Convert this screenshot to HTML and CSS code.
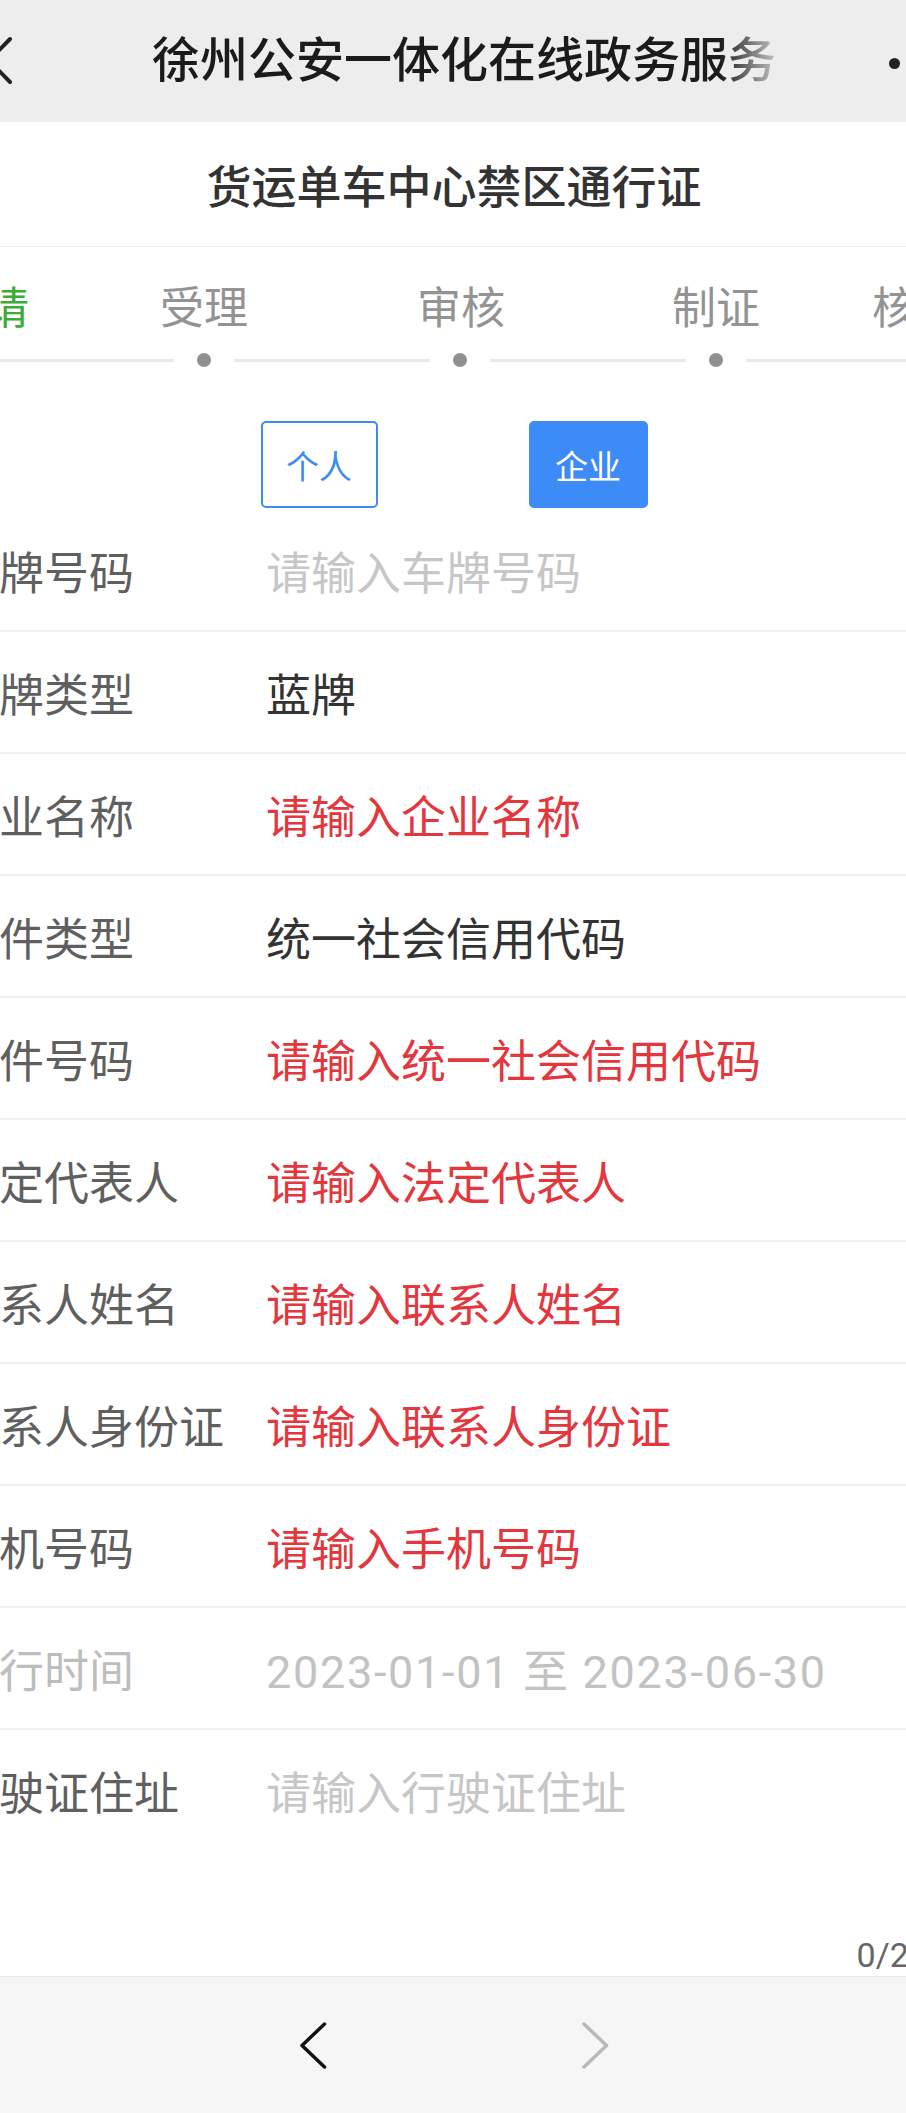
FILE: index.html
```html
<!DOCTYPE html>
<html lang="zh-CN">
<head>
<meta charset="utf-8">
<title>货运单车中心禁区通行证</title>
<link rel="stylesheet" href="styles.css">
</head>
<body>
<div class="page">
  <header class="nav">
    <div class="nav-back">
      <svg width="70" height="122" viewBox="0 0 70 122"><polyline points="56,39 35,60.5 56,82" fill="none" stroke="#222" stroke-width="4" stroke-linecap="round" stroke-linejoin="round"/></svg>
    </div>
    <div class="nav-title">徐州公安一体化在线政务服务</div>
    <div class="nav-more"><i></i><i></i><i></i></div>
  </header>

  <div class="subtitle">货运单车中心禁区通行证</div>

  <div class="steps">
    <div class="step-labels">
      <span class="step done s1">申请</span>
      <span class="step s2">受理</span>
      <span class="step s3">审核</span>
      <span class="step s4">制证</span>
      <span class="step s5">核发</span>
    </div>
    <div class="step-track">
      <span class="seg seg-first"></span>
      <span class="dot"></span>
      <span class="seg seg-mid"></span>
      <span class="dot"></span>
      <span class="seg seg-mid"></span>
      <span class="dot"></span>
      <span class="seg seg-last"></span>
    </div>
  </div>

  <div class="types">
    <button class="type-btn">个人</button>
    <button class="type-btn active">企业</button>
  </div>

  <div class="form">
    <div class="row"><span class="label">车牌号码</span><span class="value ph">请输入车牌号码</span></div>
    <div class="row"><span class="label">车牌类型</span><span class="value">蓝牌</span></div>
    <div class="row"><span class="label">企业名称</span><span class="value req">请输入企业名称</span></div>
    <div class="row"><span class="label">证件类型</span><span class="value">统一社会信用代码</span></div>
    <div class="row"><span class="label">证件号码</span><span class="value req">请输入统一社会信用代码</span></div>
    <div class="row"><span class="label">法定代表人</span><span class="value req">请输入法定代表人</span></div>
    <div class="row"><span class="label">联系人姓名</span><span class="value req">请输入联系人姓名</span></div>
    <div class="row"><span class="label">联系人身份证</span><span class="value req">请输入联系人身份证</span></div>
    <div class="row"><span class="label">手机号码</span><span class="value req">请输入手机号码</span></div>
    <div class="row disabled"><span class="label">通行时间</span><span class="value date">2023-01-01 至 2023-06-30</span></div>
    <div class="row-area">
      <span class="label">行驶证住址</span>
      <span class="value ph">请输入行驶证住址</span>
      <span class="counter">0/200</span>
    </div>
  </div>

  <div class="toolbar">
    <svg class="tb-icon" width="27" height="47" viewBox="0 0 27 47"><polyline points="24.5,2 2,23.5 24.5,45" fill="none" stroke="#111" stroke-width="3.5" stroke-linecap="round" stroke-linejoin="round"/></svg>
    <svg class="tb-icon" width="27" height="47" viewBox="0 0 27 47"><polyline points="2,2 24.5,23.5 2,45" fill="none" stroke="#b8b8b8" stroke-width="3.5" stroke-linecap="round" stroke-linejoin="round"/></svg>
  </div>
</div>
</body>
</html>
```

FILE: styles.css
```css
html, body {
  margin: 0;
  padding: 0;
  background: #ffffff;
}
body {
  width: 906px;
  overflow-x: hidden;
  font-family: Roboto, "Noto Sans CJK SC", "Noto Sans", sans-serif;
  color: #333;
}
.page {
  width: 1000px;
  margin-left: -46px;
}

/* top navigation */
.nav {
  height: 122px;
  background: #ededed;
  display: grid;
  grid-template-columns: 198px 624px 1fr;
  align-items: center;
}
.nav-back {
  height: 122px;
}
.nav-back svg {
  display: block;
}
.nav-title {
  font-size: 48px;
  font-weight: 500;
  color: #1b1b1b;
  white-space: nowrap;
  line-height: 60px;
  -webkit-mask-image: linear-gradient(to right, #000 0, #000 calc(100% - 56px), rgba(0,0,0,0.2) 100%);
  mask-image: linear-gradient(to right, #000 0, #000 calc(100% - 56px), rgba(0,0,0,0.2) 100%);
}
.nav-more {
  display: flex;
  gap: 6px;
  padding-left: 113px;
}
.nav-more i {
  width: 11px;
  height: 11px;
  border-radius: 50%;
  background: #222;
  margin-top: 4px;
}

/* sub title */
.subtitle {
  height: 125px;
  border-bottom: 1px solid #ececec;
  display: flex;
  align-items: center;
  justify-content: center;
  font-size: 45px;
  font-weight: 500;
  color: #333;
  box-sizing: border-box;
}

/* steps */
.steps {
  padding-top: 40px;
}
.step-labels {
  display: flex;
  font-size: 44px;
  line-height: 44px;
  color: #939393;
  white-space: nowrap;
}
.step.done { color: #3dab37; }
.s1 { margin-left: -13px; }
.s2 { margin-left: 131px; }
.s3 { margin-left: 169px; }
.s4 { margin-left: 167px; }
.s5 { margin-left: 112px; }

.step-track {
  margin-top: 22px;
  height: 14px;
  display: flex;
  align-items: center;
}
.seg {
  height: 3px;
  background: #e9e9e9;
}
.seg-first { width: 220px; }
.seg-mid { width: 196px; }
.seg-last { flex: 1; }
.dot {
  width: 14px;
  height: 14px;
  border-radius: 50%;
  background: #8f8f8f;
  margin: 0 23px;
}

/* type buttons */
.types {
  margin-top: 54px;
  display: flex;
  justify-content: center;
  gap: 151px;
}
.type-btn {
  height: 87px;
  width: 117px;
  box-sizing: border-box;
  border: 2px solid #3f8bf0;
  border-radius: 5px;
  background: #fff;
  color: #3f8bf0;
  font-family: inherit;
  font-size: 33px;
  padding: 0;
  margin: 0;
}
.type-btn.active {
  width: 119px;
  background: #3d8bf7;
  border-color: #3d8bf7;
  color: #fff;
}

/* form rows */
.form {
  margin-top: 2px;
}
.row {
  height: 122px;
  box-sizing: border-box;
  border-bottom: 2px solid #efefef;
  display: flex;
  align-items: center;
  font-size: 45px;
  white-space: nowrap;
}
.label {
  width: 312px;
  flex: none;
  color: #5f5f5f;
}
.value { color: #333; }
.value.ph { color: #c6c6c6; }
.value.req { color: #e3363d; }
.row.disabled .label { color: #bdbdbd; }
.value.date { color: #c2c2c2; letter-spacing: 1.7px; }

.row-area {
  height: 246px;
  display: grid;
  grid-template-columns: 312px 1fr;
  grid-template-rows: 120px 1fr;
  font-size: 45px;
  white-space: nowrap;
  padding-right: 7px;
}
.row-area .label,
.row-area .value {
  align-self: center;
}
.counter {
  grid-column: 2;
  grid-row: 2;
  justify-self: end;
  align-self: end;
  font-size: 34px;
  line-height: 40px;
  margin-bottom: 1px;
  color: #666;
}

/* bottom toolbar */
.toolbar {
  height: 137px;
  box-sizing: border-box;
  border-top: 1px solid #e6e6e6;
  background: #f6f6f6;
  display: flex;
  align-items: center;
  justify-content: center;
  gap: 255px;
}
.tb-icon { display: block; }
```
